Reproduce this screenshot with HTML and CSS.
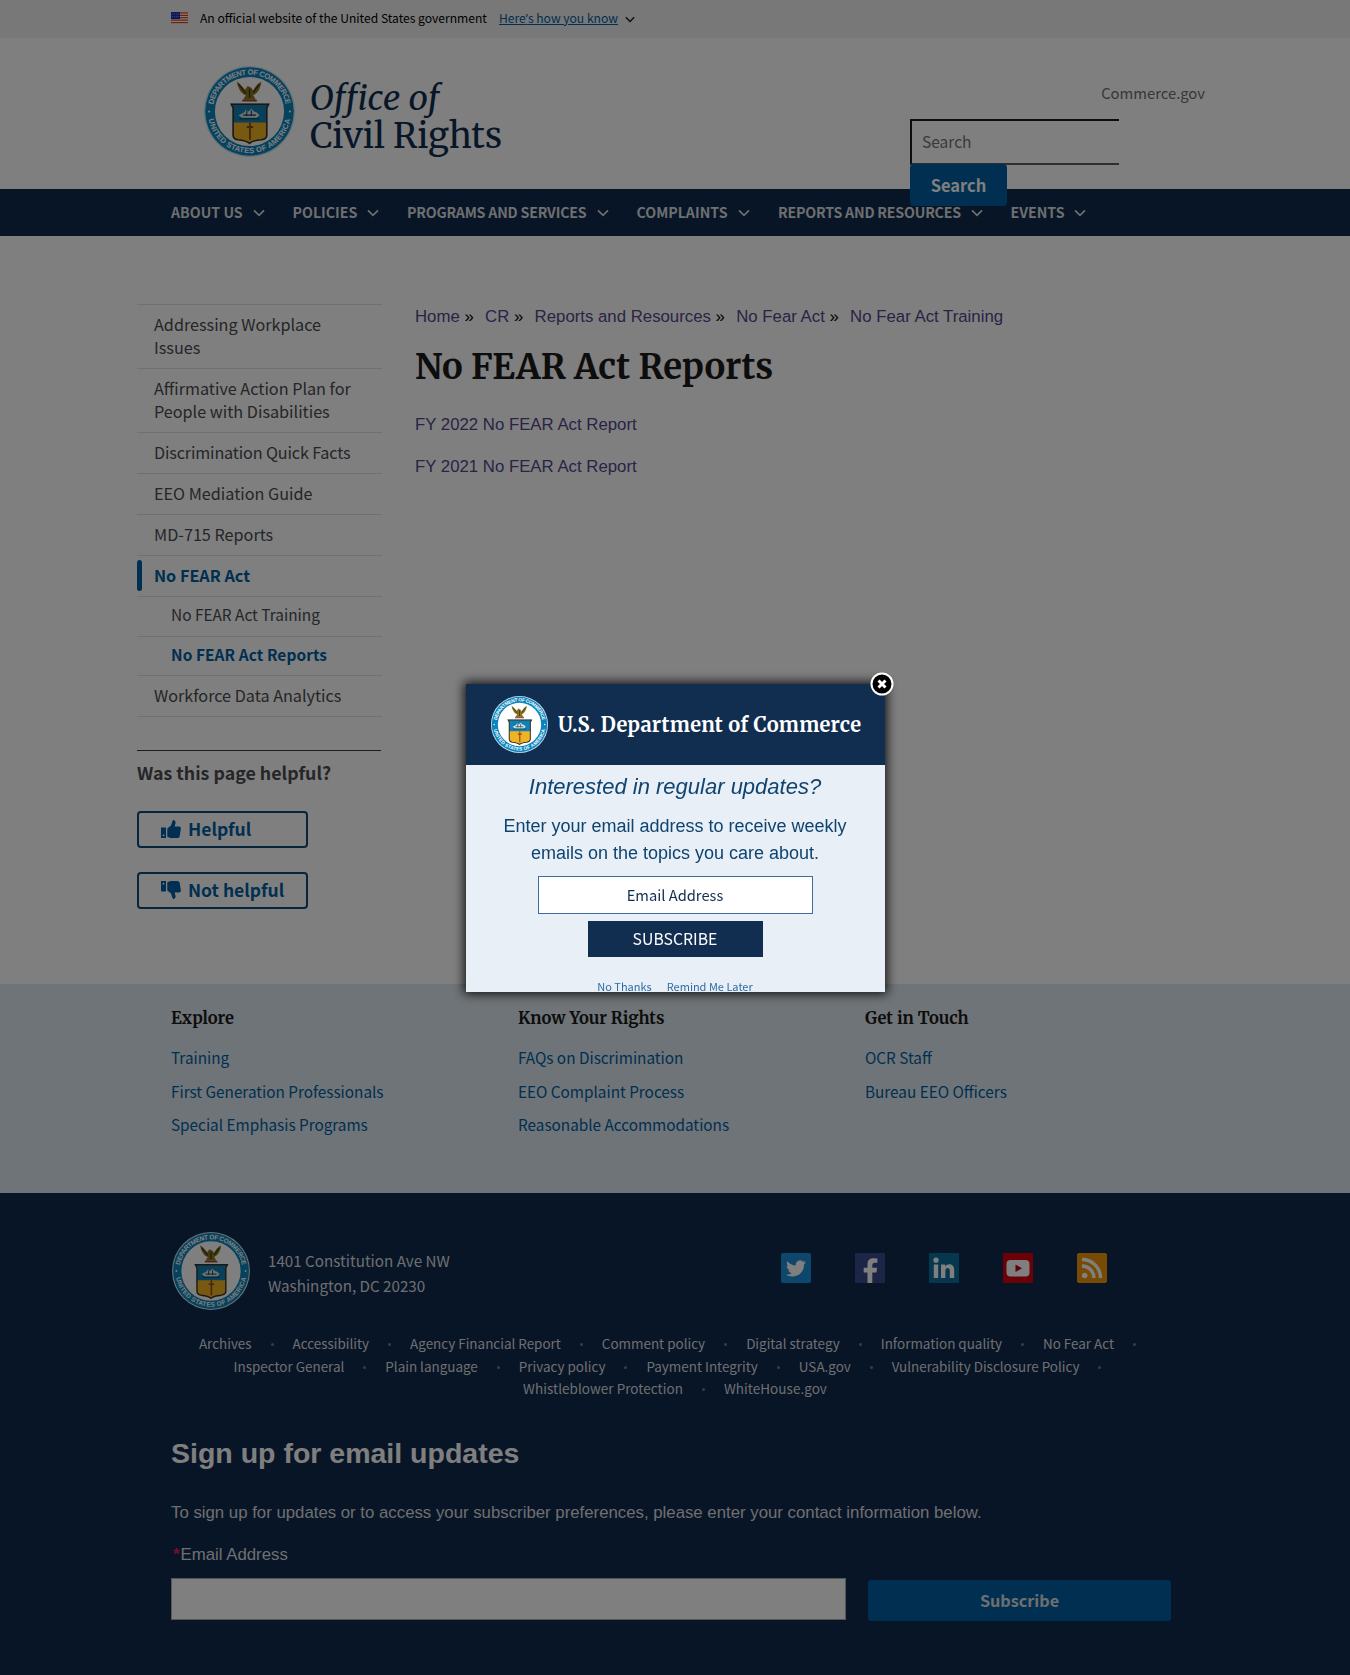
FILE: index.html
```html
<!DOCTYPE html>
<html lang="en">
<head>
<meta charset="utf-8">
<title>No FEAR Act Reports | Office of Civil Rights</title>
<link rel="stylesheet" href="styles.css">
</head>
<body>
<svg class="defs" width="0" height="0" aria-hidden="true">
  <defs>
    <path id="arc-top" d="M9.5 50a40.5 40.5 0 0 1 81 0"/>
    <path id="arc-bottom" d="M4.3 50a45.7 45.7 0 0 0 91.4 0"/>
    <symbol id="seal" viewBox="0 0 100 100">
      <circle cx="50" cy="50" r="50" fill="#c9e3f0"/>
      <circle cx="50" cy="50" r="48.6" fill="#0b84bd"/>
      <circle cx="50" cy="50" r="38" fill="#fff"/>
      <g class="seal-text">
        <text><textPath href="#arc-top" startOffset="50%" text-anchor="middle" textLength="112">DEPARTMENT OF COMMERCE</textPath></text>
        <text><textPath href="#arc-bottom" startOffset="50%" text-anchor="middle" textLength="126">UNITED STATES OF AMERICA</textPath></text>
      </g>
      <circle cx="5.6" cy="50" r="1.2" fill="#fff"/><circle cx="94.4" cy="50" r="1.2" fill="#fff"/>
      <path d="M36 17c2 10 6 14 10 15l-3 5h14l-3-5c5-2 8-7 9-15-5 3-7 6-9 10l-2-3-4-2-3 4c-3-4-6-7-9-9z" fill="#8a7420"/>
      <path d="M38 20l8 10M61 20l-7 9M50 25v10" stroke="#3d3411" stroke-width="1.4" fill="none"/>
      <path d="M42 38h16" stroke="#a5432d" stroke-width="2"/>
      <path d="M30 42h41l-2 4v30q0 4-6 5-10 1-13 4-3-3-13-4-5-1-5-5V46z" fill="#f0b323"/>
      <path d="M29.500 41.500h42l-2.500 4v16.500h-37V45.500z" fill="#1180b5"/>
      <path d="M30 42h41l-2 4v30q0 4-6 5-10 1-13 4-3-3-13-4-5-1-5-5V46z" fill="none" stroke="#33332b" stroke-width="1.800"/>
      <path d="M38 54l6-3 2-3 3 2 3-3 3 3 3 1 3 3-3 3H42z" fill="#d8e3e5"/>
      <path d="M39 58h22M43 54h14M47 49v6M52 49v6" stroke="#173b50" stroke-width="1.200"/>
      <path d="M50.500 62v19M47 67h7" stroke="#8a4d1c" stroke-width="2"/>
    </symbol>
    <symbol id="chevron" viewBox="0 0 12 8"><path d="M1 1.300l5 5 5-5" fill="none" stroke="currentColor" stroke-width="1.700"/></symbol>
    <symbol id="thumb" viewBox="0 0 20 18"><path d="M0 7.500h5V18H0zM6.300 8.500L10 5.500 11.500 1Q12-.3 13.300.3q1.700.9 1.200 3L13.600 6.500H18q2 .2 1.900 1.900l-1.300 8Q18.200 18 16.500 18H9.500l-3.200-1.200z" fill="currentColor"/><circle cx="2.500" cy="15.300" r=".9" fill="#fff"/></symbol>
  </defs>
</svg>

<section class="banner">
  <svg class="flag" viewBox="0 0 17 12"><path fill="#fff" d="M0 0h17v12H0z"/><path d="M0 .9h17M0 3.300h17M0 5.700h17M0 8.100h17M0 10.600h17" stroke="#db3e1f" stroke-width="1.300"/><path fill="#1e33b1" d="M0 0h9v7H0z"/><path d="M1 2h7M1 4.500h7" stroke="#8d9bdc" stroke-width=".8" stroke-dasharray="1 1"/></svg>
  <p class="banner-text">An official website of the United States government</p>
  <a class="banner-link" href="#">Here<span class="quote">’</span>s how you know</a>
  <svg class="banner-chevron"><use href="#chevron"/></svg>
</section>

<header class="header">
  <a class="brand" href="#">
    <svg class="brand-seal"><use href="#seal"/></svg>
    <svg class="brand-name" viewBox="0 0 200 100">
      <text x="-1.500" y="48.500" font-style="italic" textLength="130" lengthAdjust="spacingAndGlyphs">Office of</text>
      <text x="-1" y="86.700" textLength="192" lengthAdjust="spacingAndGlyphs">Civil Rights</text>
    </svg>
  </a>
  <div class="header-tools">
    <a class="commerce" href="#">Commerce.gov</a>
    <form class="search">
      <div class="search-input">Search</div>
      <button class="search-button" type="button">Search</button>
    </form>
  </div>
</header>

<nav class="nav">
  <a href="#"><span class="n1">ABOUT US</span><svg><use href="#chevron"/></svg></a>
  <a href="#"><span class="n2">POLICIES</span><svg><use href="#chevron"/></svg></a>
  <a href="#"><span class="n3">PROGRAMS AND SERVICES</span><svg><use href="#chevron"/></svg></a>
  <a href="#"><span class="n4">COMPLAINTS</span><svg><use href="#chevron"/></svg></a>
  <a href="#"><span class="n5">REPORTS AND RESOURCES</span><svg><use href="#chevron"/></svg></a>
  <a href="#"><span class="n6">EVENTS</span><svg><use href="#chevron"/></svg></a>
</nav>

<main class="main">
  <aside class="side">
    <ul class="sidenav">
      <li><a href="#">Addressing Workplace Issues</a></li>
      <li><a href="#">Affirmative Action Plan for People with Disabilities</a></li>
      <li class="tight"><a href="#">Discrimination Quick Facts</a></li>
      <li><a href="#">EEO Mediation Guide</a></li>
      <li><a href="#">MD-715 Reports</a></li>
      <li class="current"><a href="#">No FEAR Act</a></li>
      <li class="sub"><a href="#">No FEAR Act Training</a></li>
      <li class="sub active"><a href="#">No FEAR Act Reports</a></li>
      <li class="last"><a href="#">Workforce Data Analytics</a></li>
    </ul>
    <div class="feedback">
      <h2>Was this page helpful?</h2>
      <button type="button"><svg><use href="#thumb"/></svg><span>Helpful</span></button>
      <button type="button"><svg class="down"><use href="#thumb"/></svg><span>Not helpful</span></button>
    </div>
  </aside>
  <article class="content">
    <ol class="crumbs">
      <li><a href="#">Home</a> »</li>
      <li><a href="#">CR</a> »</li>
      <li><a href="#">Reports and Resources</a> »</li>
      <li><a href="#">No Fear Act</a> »</li>
      <li><a href="#">No Fear Act Training</a></li>
    </ol>
    <h1>No FEAR Act Reports</h1>
    <p><a href="#">FY 2022 No FEAR Act Report</a></p>
    <p><a href="#">FY 2021 No FEAR Act Report</a></p>
  </article>
</main>

<section class="links">
  <div>
    <h3>Explore</h3>
    <a href="#">Training</a><a href="#">First Generation Professionals</a><a href="#">Special Emphasis Programs</a>
  </div>
  <div>
    <h3>Know Your Rights</h3>
    <a href="#">FAQs on Discrimination</a><a href="#">EEO Complaint Process</a><a href="#">Reasonable Accommodations</a>
  </div>
  <div>
    <h3>Get in Touch</h3>
    <a href="#">OCR Staff</a><a href="#">Bureau EEO Officers</a>
  </div>
</section>

<footer class="footer">
  <div class="contact">
    <svg class="footer-seal"><use href="#seal"/></svg>
    <address>1401 Constitution Ave NW<br>Washington, DC 20230</address>
    <div class="social">
      <svg viewBox="0 0 30 30"><rect width="30" height="30" rx="2" fill="#1d8fd8"/><path d="M25 9.300c-.8.400-1.500.5-2.300.6.800-.5 1.400-1.200 1.700-2.100-.8.400-1.600.7-2.500.9a4.200 4.200 0 0 0-7.100 3.800c-3.400-.2-6.400-1.800-8.400-4.300-1.100 1.900-.5 4.200 1.200 5.400-.7 0-1.300-.2-1.900-.5 0 2 1.400 3.700 3.300 4.100-.6.200-1.200.2-1.800.1.500 1.600 2 2.700 3.800 2.800A8.300 8.300 0 0 1 5 21.800c6.500 4 18 1 18-10.400.8-.6 1.500-1.300 2-2.100z" fill="#fff"/></svg>
      <svg viewBox="0 0 30 30"><rect width="30" height="30" rx="1" fill="#3b4a8c"/><path d="M12.500 30V19.500H8.700v-4.700h3.800v-3.500c0-4.100 2.400-6 6-6l3.900.3v4.200h-2.600c-2 0-2.500 1-2.500 2.400v2.600h4.800l-.7 4.700h-4.100V30z" fill="#fff"/></svg>
      <svg viewBox="0 0 30 30"><rect width="30" height="30" rx="1" fill="#0a6f9c"/><circle cx="7" cy="7.200" r="2.600" fill="#fff"/><path d="M4.800 11.500h4.400V25H4.800zM12 11.500h4.200v2c2-3.500 9-3.200 9 3.300V25h-4.400v-7.300c0-3.600-4.400-3.300-4.400 0V25H12z" fill="#fff"/></svg>
      <svg viewBox="0 0 30 30"><rect width="30" height="30" rx="1" fill="#d9000f"/><rect x="3.500" y="7" width="23" height="16.500" rx="4" fill="#fff"/><path d="M12.500 11.500v7.500l6.500-3.700z" fill="#c00015"/></svg>
      <svg viewBox="0 0 30 30"><rect width="30" height="30" rx="2" fill="#f09609"/><circle cx="7.700" cy="22.500" r="2.800" fill="#fff"/><path d="M5 13a12 12 0 0 1 12 12M5 6.500A18.500 18.500 0 0 1 23.500 25" fill="none" stroke="#fff" stroke-width="3.400"/></svg>
    </div>
  </div>
  <div class="legal">
    <ul><li>Archives</li><li>Accessibility</li><li>Agency Financial Report</li><li>Comment policy</li><li>Digital strategy</li><li>Information quality</li><li>No Fear Act</li></ul>
    <ul><li>Inspector General</li><li>Plain language</li><li>Privacy policy</li><li>Payment Integrity</li><li>USA.gov</li><li>Vulnerability Disclosure Policy</li></ul>
    <ul class="end"><li>Whistleblower Protection</li><li>WhiteHouse.gov</li></ul>
  </div>
  <form class="signup">
    <h2>Sign up for email updates</h2>
    <p>To sign up for updates or to access your subscriber preferences, please enter your contact information below.</p>
    <label><b>*</b>Email Address</label>
    <div class="signup-row">
      <input type="text" aria-label="Email Address">
      <button type="button">Subscribe</button>
    </div>
  </form>
</footer>

<div class="overlay">
  <div class="modal">
    <div class="modal-clip">
      <div class="modal-head">
        <svg class="modal-seal"><use href="#seal"/></svg>
        <svg class="modal-title" viewBox="0 0 304 40"><text x="0" y="27.300" textLength="303" lengthAdjust="spacing">U.S. Department of Commerce</text></svg>
      </div>
      <h2>Interested in regular updates?</h2>
      <p>Enter your email address to receive weekly<br>emails on the topics you care about.</p>
      <div class="modal-input">Email Address</div>
      <button type="button">SUBSCRIBE</button>
      <div class="modal-links"><a href="#">No Thanks</a><a href="#">Remind Me Later</a></div>
    </div>
    <svg class="close" viewBox="0 0 24 24"><circle cx="12" cy="12" r="10.500" fill="#000" stroke="#fff" stroke-width="2"/><path d="M8.500 8.500l7 7m0-7l-7 7" stroke="#fff" stroke-width="3"/></svg>
  </div>
</div>
</body>
</html>
```

FILE: styles.css
```css
:root {
  --sans: "Source Sans Pro", "Noto Sans CJK SC", sans-serif;
  --serif: "Merriweather", "DejaVu Serif Condensed", "DejaVu Serif", serif;
  --arial: "Liberation Sans", Arial, sans-serif;
  --navy: #112a4c;
  --blue: #005ea2;
}
* { box-sizing: border-box; }
body { margin: 0; width: 1350px; height: 1675px; overflow: hidden; background: #fff; font-family: var(--sans); color: #1b1b1b; }
h1, h2, h3, p, ul, ol { margin: 0; padding: 0; list-style: none; }
a { color: inherit; text-decoration: none; }
button { font-family: var(--sans); border: 0; padding: 0; margin: 0; }
.defs { position: absolute; }
.seal-text { font: bold 8.300px "Liberation Sans", sans-serif; fill: #fff; }

.banner { height: 38px; background: #f0f0f0; display: flex; align-items: center; padding: 0 0 2px 171px; font-size: 12.1px; line-height: 16px; }
.flag { width: 17px; height: 12px; margin-right: 12px; }
.banner-text { width: 299px; white-space: nowrap; color: #000; }
.banner-link { color: var(--blue); text-decoration: underline; width: 126px; white-space: nowrap; }
.quote { font-family: "Noto Sans", sans-serif; }
.banner-chevron { width: 10px; height: 7px; margin-top: 2px; }

.header { height: 151px; display: flex; justify-content: space-between; padding: 28px 145px 0 204px; position: relative; z-index: 1; }
.brand { display: flex; gap: 16px; }
.brand-seal { width: 91px; height: 91px; }
.brand-name { width: 200px; height: 100px; margin-top: -5px; font: 34px var(--serif); fill: #112e51; overflow: visible; }
.header-tools { width: 295px; display: flex; flex-direction: column; }
.commerce { align-self: flex-end; font-size: 14.800px; line-height: 24px; margin: 15px 0 14px; color: #6a6f76; }
.search-input { width: 209px; height: 46px; border: solid #1b1b1b; border-width: 2px 0 2px 2px; border-bottom-color: #565c65; padding-left: 10px; font-size: 15.5px; line-height: 41px; color: #757575; }
.search-button { display: block; margin-top: -1px; width: 97px; height: 42px; border-radius: 4px; background: var(--blue); color: #fff; font: bold 16.5px var(--sans); }

.nav { height: 47px; background: var(--navy); display: flex; align-items: center; gap: 29px; padding: 0 0 2px 171px; font-size: 14.2px; font-weight: 700; color: #dcdee0; line-height: 20px; }
.nav a { display: flex; align-items: center; gap: 10px; white-space: nowrap; }
.nav svg { width: 12px; height: 8px; margin: 2px -1px 0 -.5px; }
.n1 { width: 72px; } .n2 { width: 65px; } .n3 { width: 180px; } .n4 { width: 92px; } .n5 { width: 183px; } .n6 { width: 54px; }
.n3, .n5 { letter-spacing: -.2px; }

.main { height: 748px; display: flex; gap: 33px; padding: 68px 145px 0 137px; }
.side { width: 245px; }
.sidenav { color: #4a4c50; font-size: 16.200px; line-height: 23px; }
.sidenav li { border-top: 1px solid #dfe1e2; padding: 7.5px 20px 9.5px 17px; }
.sidenav .tight { letter-spacing: -.15px; }
.sidenav .last { border-bottom: 1px solid #dfe1e2; }
.sidenav .current { font-weight: 700; color: var(--blue); position: relative; }
.current::before { content: ""; position: absolute; left: 0; top: 4px; width: 5px; height: 31px; border-radius: 3px; background: var(--blue); }
.sidenav .sub { padding: 6.200px 0 9.500px 34px; font-size: 15.4px; }
.sidenav .active { font-weight: 700; color: var(--blue); letter-spacing: .1px; }
.feedback { margin-top: 33px; width: 244px; border-top: 1px solid #3d3d3d; padding-top: 7px; }
.feedback h2 { font-size: 17.800px; line-height: 28px; color: #4a4c50; margin-bottom: 25px; }
.feedback button { display: flex; align-items: center; width: 171px; height: 37px; margin-bottom: 24px; padding: 0 0 2px 22px; gap: 7px; border: 2px solid #0f4a75; border-radius: 4px; background: transparent; color: var(--blue); font-size: 17.500px; font-weight: 700; line-height: 31px; }
.feedback svg { width: 20px; height: 18px; }
.feedback .down { transform: scaleY(-1); }

.content { font: 16.800px/24px var(--arial); padding-top: 1px; }
.crumbs { display: flex; gap: 11.300px; margin-bottom: 14px; white-space: nowrap; }
.content a { color: #54478c; }
.content h1 { font: bold 34.700px/48px var(--serif); margin-bottom: 22px; white-space: nowrap; }
.content p { margin-bottom: 18px; }
.crumbs li { color: #000; }

.links { height: 209px; background: #dfe9f0; padding: 23px 171px 0; display: grid; grid-template-columns: 347px 347px 1fr; color: var(--blue); font-size: 15.3px; }
.links h3 { font: bold 16.550px/24px var(--serif); color: #1b1b1b; margin-bottom: 10px; white-space: nowrap; }
.links a { display: block; line-height: 33.500px; }

.footer { height: 482px; background: var(--navy); padding: 39px 171px 0; color: #dcdee0; }
.contact { display: flex; height: 79px; padding-left: 1px; }
.footer-seal { width: 78px; height: 78px; }
address { font-style: normal; font-size: 15.2px; line-height: 25px; margin: 16px 0 0 18px; width: 513px; }
.social { display: flex; gap: 44px; padding-top: 21px; }
.social svg { width: 30px; height: 30px; }
.legal { margin: 21px -50px 0; font-size: 13.450px; line-height: 22.500px; }
.legal ul { display: flex; justify-content: center; white-space: nowrap; padding-left: 4px; }
.legal li { display: flex; align-items: center; }
.legal li::after { content: ""; width: 3px; height: 3px; border-radius: 50%; background: #6d7c92; margin: 3px 19px 0 19px; }
.legal .end { padding: 0; letter-spacing: .07px; }
.legal .end li:last-child::after { display: none; }
.signup { font-family: var(--arial); font-size: 16.800px; line-height: 24px; }
.signup h2 { font-size: 28.500px; line-height: 36px; margin-top: 35px; color: #fff; }
.signup p { margin-top: 30px; white-space: nowrap; }
.signup label { display: block; margin-top: 18px; padding-left: 2px; }
.signup label b { color: #e5204a; font-weight: 700; margin-right: 1px; }
.signup-row { display: flex; gap: 22px; margin-top: 11px; }
.signup input { width: 675px; height: 42px; border: 1px solid #a9aeb1; background: #fff; padding: 0; }
.signup button { width: 303px; height: 41px; margin-top: 2px; border-radius: 3px; background: var(--blue); color: #dcdee0; font-size: 16.200px; font-weight: 700; }

.overlay { position: fixed; inset: 0; background: rgba(0, 0, 0, .5); z-index: 10; display: flex; justify-content: center; align-items: flex-start; padding-top: 684px; }
.modal { position: relative; width: 419px; height: 308px; box-shadow: 0 0 10px 2px rgba(0, 0, 0, .85); }
.modal-clip { height: 308px; background: #e8eff6; display: flex; flex-direction: column; align-items: center; text-align: center; color: #112e51; }
.modal-head { width: 100%; height: 81px; flex: none; background: #112e51; display: flex; align-items: center; padding-left: 25px; gap: 10px; }
.modal-seal { width: 57px; height: 57px; }
.modal-title { width: 304px; height: 40px; font: bold 20px var(--serif); fill: #fff; }
.modal h2 { font: italic 22px/28px var(--arial); margin-top: 8px; color: #0f4370; }
.modal p { font: 18px/27px var(--arial); margin-top: 12px; color: #0f4370; }
.modal-input { flex: none; width: 275px; height: 38px; margin-top: 9px; border: 1px solid #3f6c9c; background: #fff; font-size: 14.700px; line-height: 35px; }
.modal button { flex: none; width: 175px; height: 36px; margin-top: 7px; background: #112e51; color: #fff; font-size: 15.800px; line-height: 34px; }
.modal-links { display: flex; gap: 15px; margin-top: 23px; font-size: 11px; line-height: 12px; color: #2e6da4; }
.close { position: absolute; top: -12px; right: -9px; width: 24px; height: 24px; }
```
